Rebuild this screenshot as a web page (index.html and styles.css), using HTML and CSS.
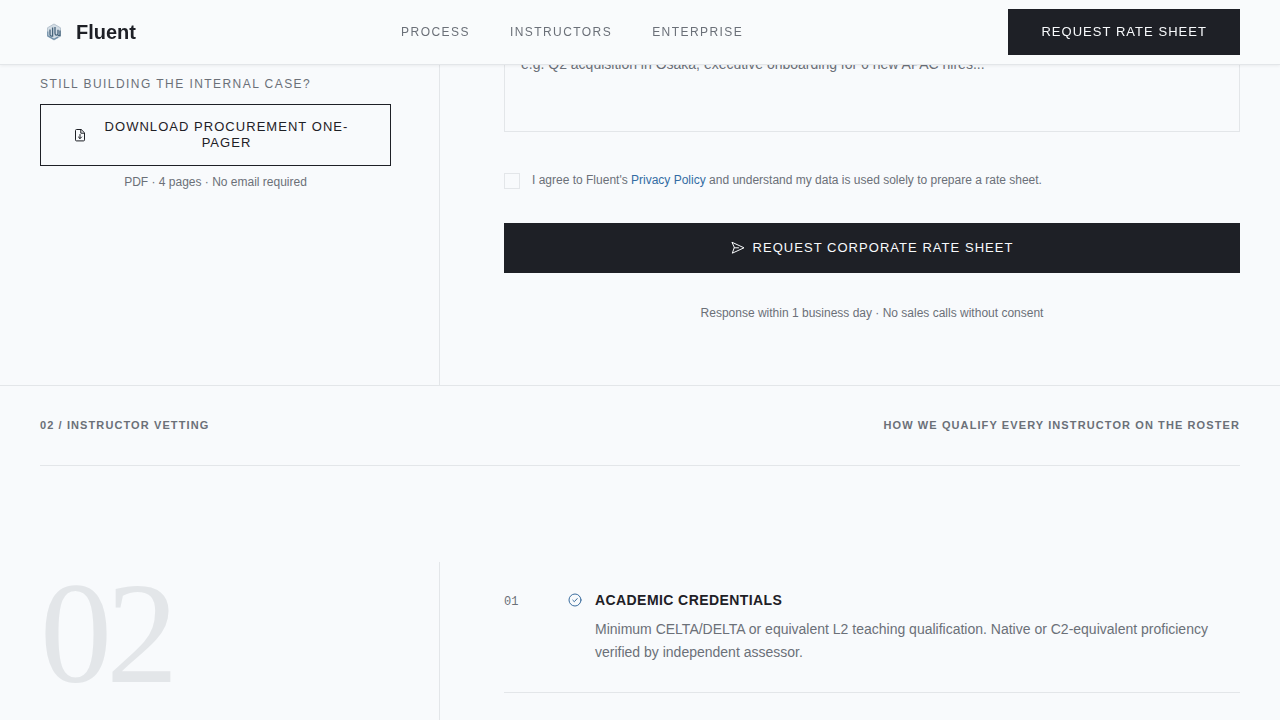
FILE: index.html
```
<!DOCTYPE html>
<html lang="en">
<head>
  <meta charset="UTF-8">
  <meta name="viewport" content="width=device-width, initial-scale=1.0">
  <title>Fluent</title>
  <link rel="stylesheet" href="styles.css">
</head>
<body>
  <header class="header">
    <a class="logo" href="#">
      <svg class="logo-mark" viewBox="0 0 28 28" aria-hidden="true">
        <path d="M14 6l6.5 3.8v8.4L14 22l-6.5-3.8V9.8z" fill="#d3dde5" stroke="#b7c4cf" stroke-width="1"/>
        <path d="M10 11.5v5q0 1.6 1.4 1.6h1.2V9.6M15 9v6.2q0 2 1.5 2t1.5-2v-3.4M18 17.5h2v-5" fill="none" stroke="#44637b" stroke-width="1.3"/>
        <path d="M7.8 13.5v4.4l6.2 3.4 4-2.2" fill="none" stroke="#6f8fa8" stroke-width="1.2"/>
      </svg>
      <span>Fluent</span>
    </a>
    <nav class="nav">
      <a href="#process">Process</a>
      <a href="#vetting">Instructors</a>
      <a href="#enterprise">Enterprise</a>
    </nav>
    <a class="btn btn-dark" href="#request">Request Rate Sheet</a>
  </header>

  <section class="request split" id="request">
    <div class="split-left request-aside">
      <p class="eyebrow">Still building the internal case?</p>
      <button class="btn btn-outline" type="button">
        <svg class="icon" viewBox="0 0 14 14" aria-hidden="true">
          <path d="M7.8 1.5H3.5a1 1 0 0 0-1 1v9.4a1 1 0 0 0 1 1h7a1 1 0 0 0 1-1V5.2zM7.8 1.7v3.5h3.5M7 6.5v4M5.4 9L7 10.6 8.6 9"/>
        </svg>
        <span>Download Procurement One-Pager</span>
      </button>
      <p class="note">PDF · 4 pages · No email required</p>
    </div>
    <form class="split-right request-form">
      <textarea class="field" aria-label="Project details" placeholder="e.g. Q2 acquisition in Osaka, executive onboarding for 6 new APAC hires..."></textarea>
      <div class="consent">
        <input type="checkbox" id="consent">
        <label for="consent">I agree to Fluent's <a href="#privacy">Privacy Policy</a> and understand my data is used solely to prepare a rate sheet.</label>
      </div>
      <button class="btn btn-dark btn-submit" type="submit">
        <svg class="icon" viewBox="0 0 14 14" aria-hidden="true">
          <path d="M1.3 1.4L13 6.8 1.3 12.2 3.2 6.8zM3.2 6.8H7.5"/>
        </svg>
        <span>Request Corporate Rate Sheet</span>
      </button>
      <p class="note">Response within 1 business day · No sales calls without consent</p>
    </form>
  </section>

  <section class="vetting" id="vetting">
    <div class="section-bar">
      <h2>02 / Instructor Vetting</h2>
      <span>How we qualify every instructor on the roster</span>
    </div>
    <div class="split vetting-body">
      <div class="split-left">
        <div class="big-number">02</div>
      </div>
      <div class="split-right">
        <article class="step">
          <span class="step-number">01</span>
          <svg class="icon step-icon" viewBox="0 0 14 14" aria-hidden="true">
            <circle cx="7" cy="7" r="6"/>
            <path d="M4.8 7.2l1.5 1.5 2.9-3.1"/>
          </svg>
          <div>
            <h3>Academic Credentials</h3>
            <p>Minimum CELTA/DELTA or equivalent L2 teaching qualification. Native or C2-equivalent proficiency verified by independent assessor.</p>
          </div>
        </article>
      </div>
    </div>
  </section>
</body>
</html>
```

FILE: styles.css
```
* {
  box-sizing: border-box;
}
body {
  margin: 0;
  min-height: 100vh;
  display: flex;
  flex-direction: column;
  background-color: #f8fafc;
  color: #1e2026;
  font-family: "Liberation Sans", Arial, sans-serif;
}
h2, h3, p {
  margin: 0;
}
a {
  text-decoration: none;
}

/* header */
.header {
  position: fixed;
  top: 0;
  left: 0;
  right: 0;
  z-index: 10;
  height: 65px;
  padding: 0 40px;
  display: flex;
  align-items: center;
  justify-content: space-between;
  background-color: #f9fbfc;
  border-bottom: 1px solid #e3e6e9;
  box-shadow: 0 1px 3px rgba(0, 0, 0, 0.06);
}
.logo {
  display: flex;
  align-items: center;
  gap: 8px;
  color: #1e2026;
  font-size: 20px;
  font-weight: bold;
}
.logo-mark {
  width: 28px;
  height: 28px;
}
.nav {
  display: flex;
  gap: 40px;
}
.nav a {
  color: #6b7078;
  font-size: 12px;
  letter-spacing: 0.12em;
  text-transform: uppercase;
}

/* buttons */
.btn {
  display: flex;
  align-items: center;
  justify-content: center;
  gap: 8px;
  padding: 14px 32px;
  border: 1px solid #1e2026;
  font-family: inherit;
  font-size: 13px;
  line-height: 16px;
  letter-spacing: 0.08em;
  text-align: center;
  text-transform: uppercase;
  cursor: pointer;
}
.btn-dark {
  background-color: #1e2026;
  color: #f8fafc;
}
.btn-outline {
  width: 100%;
  background-color: transparent;
  color: #1e2026;
}
.icon {
  flex: none;
  width: 14px;
  height: 14px;
  fill: none;
  stroke: currentColor;
  stroke-width: 1;
  stroke-linecap: round;
  stroke-linejoin: round;
}

/* two column layout */
.split {
  display: grid;
  grid-template-columns: 1fr 2fr;
  padding: 0 40px;
}
.split-left {
  padding-right: 48px;
  border-right: 1px solid #e3e6e9;
}
.split-right {
  padding-left: 64px;
}

/* request form */
.request {
  border-bottom: 1px solid #e3e6e9;
}
.request-aside {
  padding-top: 76px;
}
.eyebrow {
  margin-bottom: 12px;
  color: #6b7078;
  font-size: 12px;
  line-height: 16px;
  letter-spacing: 0.12em;
  text-transform: uppercase;
}
.note {
  color: #6b7078;
  font-size: 12px;
  line-height: 16px;
  text-align: center;
}
.request-aside .note {
  margin-top: 8px;
}
.request-form {
  padding-top: 40px;
  padding-bottom: 64px;
}
.field {
  display: block;
  width: 100%;
  height: 92px;
  padding: 12px 16px;
  border: 1px solid #e3e6e9;
  background-color: transparent;
  font-family: inherit;
  font-size: 14px;
  line-height: 22px;
  resize: none;
}
.field::placeholder {
  color: #6b7078;
}
.consent {
  display: flex;
  gap: 12px;
  margin: 38px 0 33px;
  color: #6b7078;
  font-size: 12px;
  line-height: 20px;
}
.consent input {
  appearance: none;
  flex: none;
  width: 16px;
  height: 16px;
  margin: 3px 0 0;
  border: 1px solid #e3e6e9;
}
.consent a {
  color: #336ca3;
}
.btn-submit {
  width: 100%;
  padding: 16px 32px;
}
.request-form .note {
  margin-top: 32px;
}

/* vetting */
.vetting {
  flex: 1;
  display: flex;
  flex-direction: column;
}
.section-bar {
  display: flex;
  justify-content: space-between;
  margin: 0 40px 96px;
  padding: 31px 0 32px;
  border-bottom: 1px solid #e3e6e9;
  color: #6b7078;
  font-size: 11px;
  font-weight: bold;
  line-height: 16px;
  letter-spacing: 0.1em;
  text-transform: uppercase;
}
.section-bar h2 {
  font-size: inherit;
}
.vetting-body {
  flex: 1;
}
.big-number {
  color: #e3e6e9;
  font-family: "Liberation Serif", "Times New Roman", serif;
  font-size: 144px;
  line-height: 1;
  letter-spacing: -0.04em;
}
.step {
  display: grid;
  grid-template-columns: 64px 27px 1fr;
  padding: 28px 0;
  border-bottom: 1px solid #e3e6e9;
}
.step-number {
  color: #6b7078;
  font-family: "Liberation Mono", "Courier New", monospace;
  font-size: 12px;
  line-height: 24px;
}
.step-icon {
  margin-top: 3px;
  color: #3a6c9e;
}
.step h3 {
  margin-bottom: 8px;
  font-size: 14px;
  line-height: 20px;
  letter-spacing: 0.03em;
  text-transform: uppercase;
}
.step p {
  color: #6b7078;
  font-size: 14px;
  line-height: 23px;
}
```
